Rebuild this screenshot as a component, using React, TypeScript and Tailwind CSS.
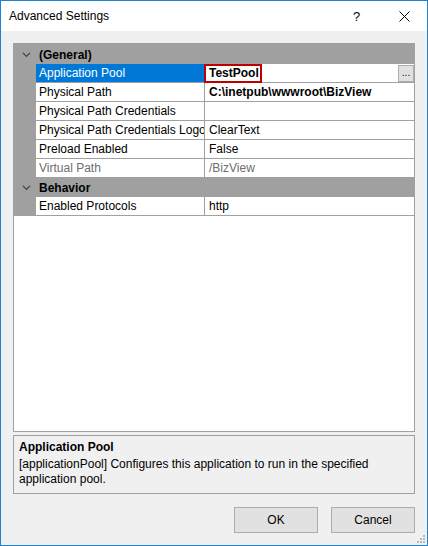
import React from "react";

type Row =
  | { kind: "cat"; label: string }
  | {
      kind: "prop";
      label: string;
      value: string;
      bold?: boolean;
      disabled?: boolean;
      selected?: boolean;
      boxed?: boolean;
      browse?: boolean;
    };

const rows: Row[] = [
  { kind: "cat", label: "(General)" },
  {
    kind: "prop",
    label: "Application Pool",
    value: "TestPool",
    bold: true,
    selected: true,
    boxed: true,
    browse: true,
  },
  { kind: "prop", label: "Physical Path", value: "C:\\inetpub\\wwwroot\\BizView", bold: true },
  { kind: "prop", label: "Physical Path Credentials", value: "" },
  { kind: "prop", label: "Physical Path Credentials Logon Type", value: "ClearText" },
  { kind: "prop", label: "Preload Enabled", value: "False" },
  { kind: "prop", label: "Virtual Path", value: "/BizView", disabled: true },
  { kind: "cat", label: "Behavior" },
  { kind: "prop", label: "Enabled Protocols", value: "http" },
];

function Chevron() {
  return (
    <svg width="9" height="6" viewBox="0 0 9 6" className="block">
      <path d="M1 0.8 L4.5 4.5 L8 0.8" fill="none" stroke="#404040" strokeWidth="1.2" />
    </svg>
  );
}

function GridRow({ row }: { row: Row }) {
  if (row.kind === "cat") {
    return (
      <div className="flex h-[19px] items-center bg-[#a0a0a0]">
        <div className="flex w-[22px] shrink-0 justify-center pl-[2px]">
          <Chevron />
        </div>
        <span className="pl-[3px] font-bold text-black">{row.label}</span>
      </div>
    );
  }
  return (
    <div className="flex h-[19px]">
      <div className="w-[22px] shrink-0 bg-[#a0a0a0]" />
      <div
        className={`flex w-[168px] shrink-0 items-center overflow-hidden whitespace-nowrap border-b border-[#a0a0a0] pl-[3px] ${
          row.selected ? "bg-[#0078d7] text-white" : row.disabled ? "text-[#6d6d6d]" : "text-black"
        }`}
      >
        {row.label}
      </div>
      <div className="relative flex min-w-0 flex-1 items-center border-b border-l border-[#a0a0a0] bg-white pl-[4px]">
        <span
          className={`whitespace-nowrap ${row.bold ? "font-bold" : ""} ${
            row.disabled ? "text-[#6d6d6d]" : "text-black"
          }`}
        >
          {row.value}
        </span>
        {row.boxed && (
          <div className="absolute left-[-1px] top-0 h-[19px] w-[58px] border-2 border-[#c00000]" />
        )}
        {row.browse && (
          <div className="absolute right-0 top-[1px] flex h-[17px] w-[16px] items-end justify-center border border-[#adadad] bg-[#e1e1e1] pb-[3px] text-[10px] leading-none">
            ...
          </div>
        )}
      </div>
    </div>
  );
}

function CloseIcon() {
  return (
    <svg width="11" height="11" viewBox="0 0 11 11">
      <path d="M0.5 0.5 L10.5 10.5 M10.5 0.5 L0.5 10.5" stroke="#000" strokeWidth="1" />
    </svg>
  );
}

function Grip() {
  const dots = [
    [6, 0],
    [3, 3],
    [6, 3],
    [0, 6],
    [3, 6],
    [6, 6],
  ];
  return (
    <svg width="8" height="8" viewBox="0 0 8 8" className="absolute bottom-[2px] right-[2px]">
      {dots.map(([x, y]) => (
        <rect key={`${x}-${y}`} x={x} y={y} width="2" height="2" fill="#b8b8b8" />
      ))}
    </svg>
  );
}

export default function App() {
  return (
    <div
      className="relative flex h-[546px] w-[428px] flex-col border border-[#1883d7] bg-[#f0f0f0] text-[12px] leading-none text-black"
      style={{ fontFamily: '"Liberation Sans", Arial, sans-serif' }}
    >
      {/* Title bar */}
      <div className="flex h-[30px] shrink-0 items-center bg-white pl-[8px]">
        <span className="flex-1">Advanced Settings</span>
        <span className="w-[14px] text-[13px]">?</span>
        <div className="ml-[32px] mr-[17px] flex items-center">
          <CloseIcon />
        </div>
      </div>

      {/* Client area */}
      <div className="flex flex-1 flex-col px-[12px] pt-[12px]">
        {/* Property grid */}
        <div className="flex h-[389px] flex-col border border-t-2 border-[#a0a0a0] bg-white">
          {rows.map((r, i) => (
            <GridRow key={i} row={r} />
          ))}
        </div>

        {/* Description */}
        <div className="mt-[3px] h-[59px] border border-[#a0a0a0] px-[5px] pt-[5px]">
          <div className="font-bold">Application Pool</div>
          <div className="mt-[4px] leading-[15px]">
            [applicationPool] Configures this application to run in the specified application pool.
          </div>
        </div>

        {/* Buttons */}
        <div className="mt-[13px] flex justify-end gap-[13px]">
          <button className="h-[26px] w-[84px] border border-[#adadad] bg-[#e1e1e1]">OK</button>
          <button className="h-[26px] w-[84px] border border-[#adadad] bg-[#e1e1e1]">Cancel</button>
        </div>
      </div>
      <Grip />
    </div>
  );
}
